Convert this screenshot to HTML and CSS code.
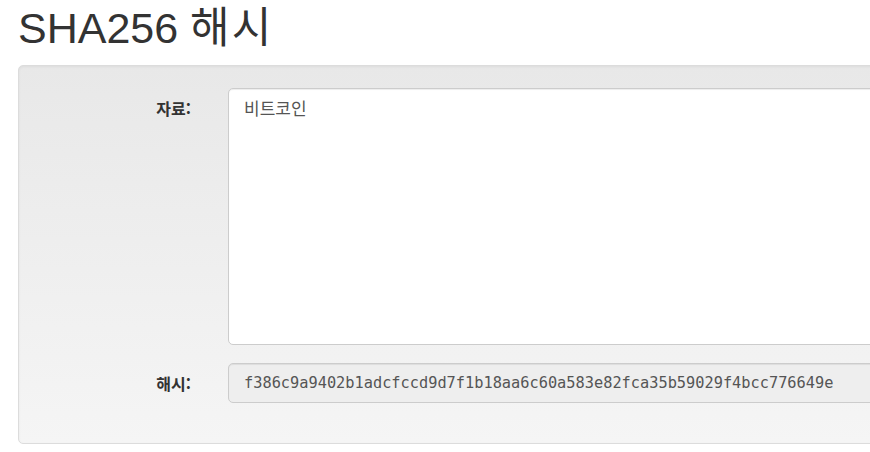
FILE: index.html
```html
<!DOCTYPE html>
<html lang="ko">
<head>
<meta charset="utf-8">
<title>SHA256 해시</title>
<link rel="stylesheet" href="styles.css">
</head>
<body>
<div class="page">
  <h1 class="title">SHA256 <span class="title-ko">해시</span></h1>
  <div class="well">
    <div class="row row-data">
      <label class="label" for="data">자료:</label>
      <textarea id="data" class="field textarea">비트코인</textarea>
    </div>
    <div class="row row-hash">
      <label class="label" for="hash">해시:</label>
      <div id="hash" class="field hash">f386c9a9402b1adcfccd9d7f1b18aa6c60a583e82fca35b59029f4bcc776649e</div>
    </div>
  </div>
</div>
</body>
</html>
```
FILE: styles.css
```css
html, body {
  margin: 0;
  padding: 0;
  background: #fff;
  overflow: hidden;
}
body {
  font-family: "Liberation Sans", Arial, "Noto Sans CJK KR", sans-serif;
  color: #333;
}
.page {
  padding-left: 18px;
  width: 1000px;
}
.title {
  margin: 0;
  padding-top: 5px;
  font-size: 43px;
  line-height: 47px;
  font-weight: 400;
  color: #333;
  font-family: "Liberation Sans", Arial, "Noto Sans CJK KR", sans-serif;
}
.title-ko {
  letter-spacing: 2px;
}
.well {
  margin-top: 13px;
  box-sizing: border-box;
  width: 980px;
  border: 1px solid #dcdcdc;
  border-radius: 5px;
  background: linear-gradient(to bottom, #e8e8e8 0%, #f5f5f5 100%);
  box-shadow: inset 0 1px 3px rgba(0,0,0,.05);
  padding: 22px 0 40px 0;
  display: flex;
  flex-direction: column;
  gap: 18px;
}
.row {
  display: flex;
  gap: 37px;
}
.row-hash {
  align-items: center;
}
.label {
  width: 172px;
  flex: none;
  text-align: right;
  font-weight: 700;
  font-size: 16px;
  line-height: 22px;
  font-family: "Noto Sans CJK KR", "Liberation Sans", sans-serif;
  color: #333;
}
.row-data .label {
  padding-top: 9px;
}
.field {
  box-sizing: border-box;
  width: 700px;
  border: 1px solid #ccc;
  border-radius: 5px;
  padding: 6px 15px;
  box-shadow: inset 0 1px 1px rgba(0,0,0,.075);
}
.textarea {
  height: 257px;
  background: #fff;
  color: #555;
  font-size: 17px;
  line-height: 24px;
  padding-top: 7px;
  font-family: "Noto Sans CJK KR", "Liberation Sans", sans-serif;
  resize: none;
  margin: 0;
  display: block;
}
.hash {
  height: 40px;
  background: #eee;
  color: #555;
  font-family: "DejaVu Sans Mono", monospace;
  font-size: 15.3px;
  line-height: 26px;
}
```
